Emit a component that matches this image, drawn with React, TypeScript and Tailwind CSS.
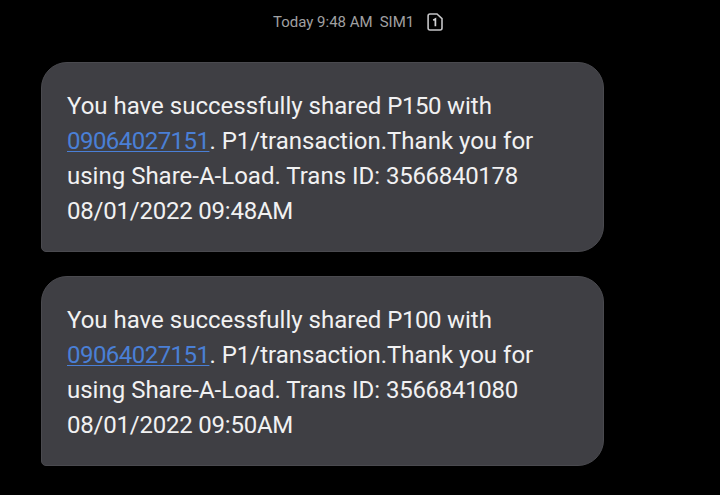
const messages = [
  { amount: 'P150', transId: '3566840178', time: '09:48AM' },
  { amount: 'P100', transId: '3566841080', time: '09:50AM' },
];

function SimIcon() {
  return (
    <svg width="16" height="18" viewBox="0 0 16 18" fill="none" className="ml-[13px]">
      <path
        d="M3 1h7l5 4.6V15c0 1.1-.8 2-1.9 2H3c-1.1 0-1.9-.9-1.9-2V3c0-1.1.8-2 1.9-2z"
        stroke="#c4c4c6"
        strokeWidth="1.6"
      />
      <path d="M6.2 7.2 8.4 6v7.2" stroke="#d2d2d4" strokeWidth="1.7" />
    </svg>
  );
}

export default function App() {
  return (
    <div className="w-[720px] h-[495px] overflow-hidden bg-black font-['Roboto',sans-serif]">
      <div className="flex items-center h-[44px] pl-[273px]">
        <span className="text-[15px] text-[#a0a0a2] whitespace-nowrap">Today 9:48 AM</span>
        <span className="ml-[7px] text-[15px] text-[#a0a0a2]">SIM1</span>
        <SimIcon />
      </div>
      <div className="flex flex-col gap-[24px] pl-[41px] pt-[18px]">
        {messages.map((m) => (
          <div
            key={m.transId}
            className="w-[563px] h-[190px] pl-[25px] pt-[26px] border border-[#4a4a4f] rounded-[26px] rounded-bl-[5px] bg-[#3f3f44] text-[#f1f1f2] text-[24px] leading-[35px]"
          >
            <div>
              You have successfully shared <span className="tracking-[-0.5px]">{m.amount}</span> with
            </div>
            <div>
              <span className="text-[#4a7fd6] underline underline-offset-2 decoration-1 tracking-[-0.54px]">09064027151</span>
              . P1/transaction.Thank you for
            </div>
            <div>
              using Share-A-Load. Trans ID: <span className="tracking-[-0.3px]">{m.transId}</span>
            </div>
            <div className="tracking-[-0.22px]">08/01/2022 {m.time}</div>
          </div>
        ))}
      </div>
    </div>
  );
}
